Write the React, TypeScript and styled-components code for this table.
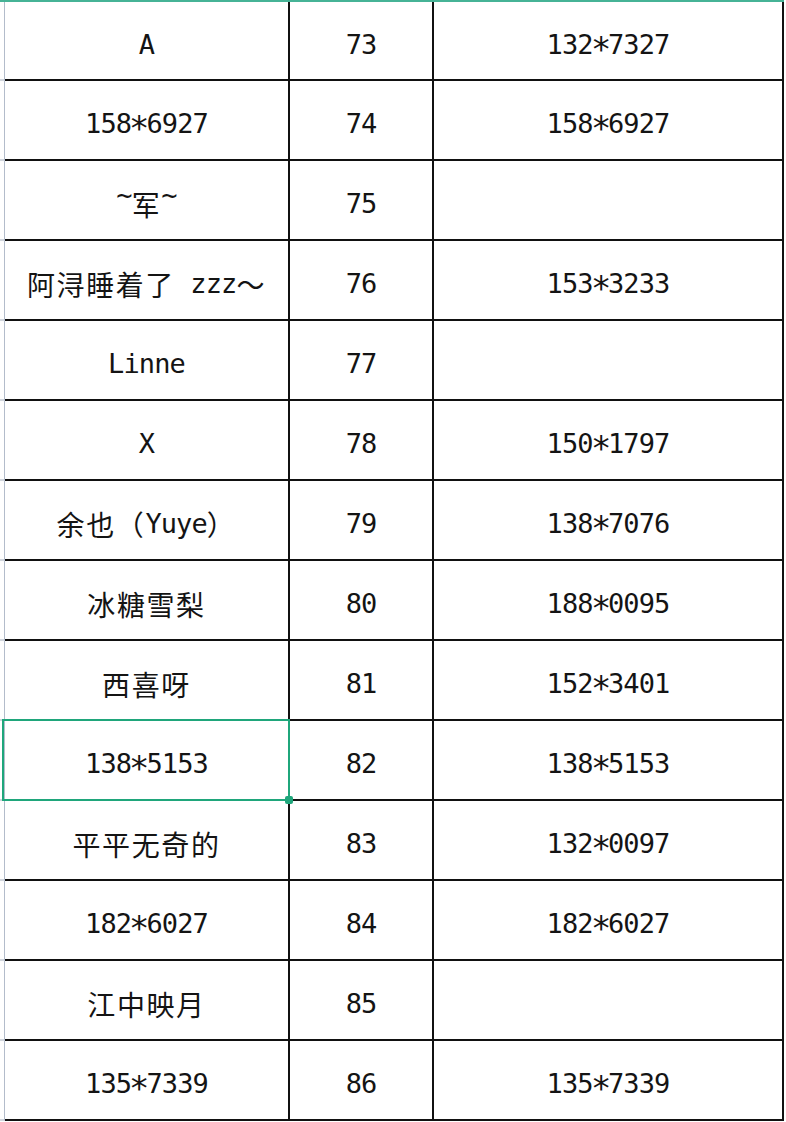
import React from "react";
import styled, { createGlobalStyle } from "styled-components";

const GlobalStyle = createGlobalStyle`
  html, body { margin: 0; padding: 0; background: #ffffff; }
  body { width: 786px; height: 1122px; overflow: hidden; }
`;

const Sheet = styled.div`
  display: grid;
  grid-template-columns: 5px 285px 144px 350px;
  grid-template-rows: 79px;
  grid-auto-rows: 80px;
  border-top: 2px solid #46b396;
  width: 784px;
`;

const Gutter = styled.div`
  box-sizing: border-box;
  border-right: 1px solid #b3bccb;
  border-bottom: 2px solid #cfd4dc;
  background: #ffffff;
`;

const Cell = styled.div<{ $selected?: boolean }>`
  position: relative;
  box-sizing: border-box;
  display: flex;
  align-items: center;
  justify-content: center;
  padding-top: 7px;
  border-right: 2px solid #111111;
  border-bottom: 2px solid #111111;
  font-family: "DejaVu Sans Mono", "Noto Sans CJK SC", monospace;
  font-size: 27px;
  letter-spacing: -0.9px;
  color: #141414;
  white-space: pre;

  ${(p) =>
    p.$selected &&
    `
    &::after {
      content: "";
      position: absolute;
      left: -3px;
      top: -2px;
      right: -2px;
      bottom: -2px;
      border: 2px solid #1fa67b;
      pointer-events: none;
    }
    &::before {
      content: "";
      position: absolute;
      right: -5px;
      bottom: -5px;
      width: 8px;
      height: 8px;
      border-radius: 2px;
      background: #1fa67b;
      z-index: 2;
    }
  `}
`;

const Han = styled.span`
  font-family: "Noto Sans CJK SC", sans-serif;
  font-size: 28px;
  letter-spacing: 1.6px;
  font-weight: 400;
`;

const Star = styled.span`
  display: inline-block;
  transform: translateY(5px) scale(1.25);
`;

const Tilde = styled.span`
  display: inline-block;
  transform: translateY(-9px);
`;

const rows: [string, string, string][] = [
  ["A", "73", "132*7327"],
  ["158*6927", "74", "158*6927"],
  ["~军~", "75", ""],
  ["阿浔睡着了 zzz～", "76", "153*3233"],
  ["Linne", "77", ""],
  ["X", "78", "150*1797"],
  ["余也（Yuye）", "79", "138*7076"],
  ["冰糖雪梨", "80", "188*0095"],
  ["西喜呀", "81", "152*3401"],
  ["138*5153", "82", "138*5153"],
  ["平平无奇的", "83", "132*0097"],
  ["182*6027", "84", "182*6027"],
  ["江中映月", "85", ""],
  ["135*7339", "86", "135*7339"],
];

const splitter = /([\u3000-\u9fff\uff00-\uffef]+|\*|~)/;
const cjk = /^[\u3000-\u9fff\uff00-\uffef]+$/;

function Text({ value }: { value: string }) {
  const parts = value.split(splitter).filter((s) => s.length > 0);
  return (
    <>
      {parts.map((part, i) => {
        if (cjk.test(part)) return <Han key={i}>{part}</Han>;
        if (part === "*") return <Star key={i}>*</Star>;
        if (part === "~") return <Tilde key={i}>~</Tilde>;
        return <span key={i}>{part}</span>;
      })}
    </>
  );
}

export default function App() {
  return (
    <>
      <GlobalStyle />
      <Sheet>
        {rows.map((r, i) => (
          <React.Fragment key={i}>
            <Gutter />
            <Cell $selected={i === 9}>
              <Text value={r[0]} />
            </Cell>
            <Cell>
              <Text value={r[1]} />
            </Cell>
            <Cell>
              <Text value={r[2]} />
            </Cell>
          </React.Fragment>
        ))}
      </Sheet>
    </>
  );
}
